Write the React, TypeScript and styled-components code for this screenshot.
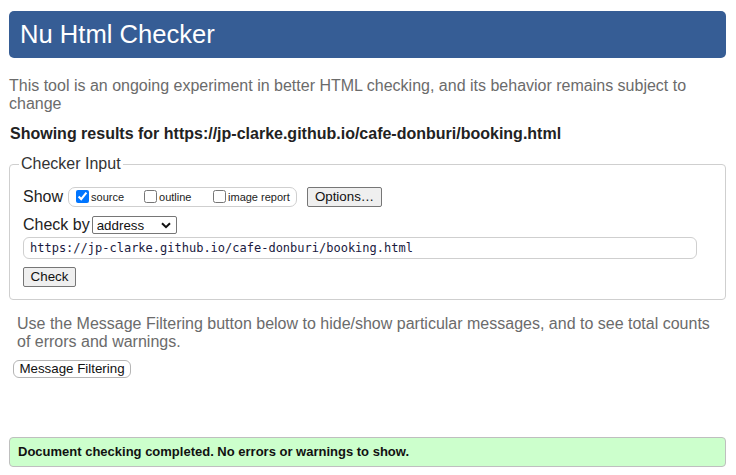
import React from "react";
import styled, { createGlobalStyle } from "styled-components";

const Global = createGlobalStyle`
  html, body { margin: 0; padding: 0; background: #fff; }
  body { font-family: Arial, "Liberation Sans", sans-serif; color: #222; }
  * { box-sizing: border-box; }
`;

const Page = styled.div`
  padding: 11px 10px 0 9px;
  width: 736px;
`;

const Header = styled.h1`
  margin: 0;
  height: 47px;
  display: flex;
  align-items: center;
  padding: 0 0 1px 11px;
  background: #365d95;
  color: #fff;
  border-radius: 5px;
  font-size: 25.6px;
  font-weight: normal;
  font-family: Arial, "Liberation Sans", sans-serif;
`;

const Intro = styled.p<{ $indent?: number; $top: number }>`
  margin: ${(p) => p.$top}px 0 0 ${(p) => p.$indent ?? 0}px;
  font-size: 16px;
  color: #6b6b6b;
  line-height: 18.4px;
`;

const Results = styled.p`
  margin: 11px 0 0 1px;
  font-size: 16px;
  font-weight: bold;
  line-height: 18.4px;
  color: #222;
`;

const Fieldset = styled.fieldset`
  margin: 12px 0 0 0;
  padding: 2px 13px 12px 13px;
  border: 1px solid #cfcfcf;
  border-radius: 4px;
  min-width: 0;
`;

const Legend = styled.legend`
  padding: 0 2px;
  margin-left: -4px;
  font-size: 16px;
  line-height: 18.4px;
  color: #333;
`;

const Row = styled.div<{ $top: number }>`
  display: flex;
  align-items: center;
  margin-top: ${(p) => p.$top}px;
`;

const Label = styled.span<{ $gap?: number }>`
  font-size: 16px;
  color: #222;
  margin-right: ${(p) => p.$gap ?? 5}px;
`;

const OptionGroup = styled.div`
  display: flex;
  align-items: center;
  height: 20px;
  width: 229px;
  padding-left: 7px;
  border: 1px solid #cfcfcf;
  border-radius: 7px;
  margin-right: 10px;
`;

const Option = styled.label<{ $width: number }>`
  display: flex;
  align-items: center;
  width: ${(p) => p.$width}px;
  font-size: 11px;
  color: #222;
  input {
    margin: 0 2px 0 0;
    width: 13px;
    height: 13px;
    accent-color: #0075ff;
  }
`;

const Button = styled.button<{ $w: number; $h?: number; $round?: boolean }>`
  width: ${(p) => p.$w}px;
  height: ${(p) => p.$h ?? 20}px;
  padding: 0;
  font-family: Arial, "Liberation Sans", sans-serif;
  font-size: 13.33px;
  color: #111;
  background: ${(p) => (p.$round ? "#fff" : "#efefef")};
  border: 1px solid ${(p) => (p.$round ? "#b5b5b5" : "#767676")};
  border-radius: ${(p) => (p.$round ? "6px" : "2px")};
`;

const SelectBox = styled.div`
  position: relative;
  width: 85px;
  height: 18px;
  select {
    width: 100%;
    height: 100%;
    appearance: none;
    border: 1px solid #767676;
    border-radius: 2px;
    background: #fff;
    padding: 0 0 0 4px;
    font-family: Arial, "Liberation Sans", sans-serif;
    font-size: 13.33px;
    color: #111;
  }
  svg {
    position: absolute;
    right: 6px;
    top: 6px;
    pointer-events: none;
  }
`;

const UrlInput = styled.input`
  width: 674px;
  height: 22px;
  border: 1px solid #cfcfcf;
  border-radius: 6px;
  padding: 0 0 0 6px;
  font-family: "DejaVu Sans Mono", "Liberation Mono", monospace;
  font-size: 12px;
  color: #1a1a40;
  outline: none;
`;

const Filter = styled.div`
  margin: 8px 0 0 4px;
`;

const Success = styled.div`
  margin-top: 59px;
  height: 30px;
  display: flex;
  align-items: center;
  padding: 0 0 0 8px;
  background: #ccffcc;
  border: 1px solid #bfbfbf;
  border-radius: 4px;
  font-size: 13px;
  font-weight: bold;
  color: #111;
`;

export default function App() {
  return (
    <>
      <Global />
      <Page>
        <Header>Nu Html Checker</Header>
        <Intro $top={19}>
          This tool is an ongoing experiment in better HTML checking, and its behavior remains subject to change
        </Intro>
        <Results>Showing results for https://jp-clarke.github.io/cafe-donburi/booking.html</Results>
        <Fieldset>
          <Legend>Checker Input</Legend>
          <Row $top={11}>
            <Label>Show</Label>
            <OptionGroup>
              <Option $width={68}>
                <input type="checkbox" defaultChecked />
                source
              </Option>
              <Option $width={69}>
                <input type="checkbox" />
                outline
              </Option>
              <Option $width={80}>
                <input type="checkbox" />
                image report
              </Option>
            </OptionGroup>
            <Button $w={75}>Options…</Button>
          </Row>
          <Row $top={9}>
            <Label $gap={2}>Check by</Label>
            <SelectBox>
              <select defaultValue="address">
                <option value="address">address</option>
                <option value="file">file upload</option>
                <option value="text">text input</option>
              </select>
              <svg width="10" height="7" viewBox="0 0 10 7">
                <path d="M1 1.2 L5 5.2 L9 1.2" fill="none" stroke="#111" strokeWidth="2" />
              </svg>
            </SelectBox>
          </Row>
          <Row $top={3}>
            <UrlInput readOnly value="https://jp-clarke.github.io/cafe-donburi/booking.html" />
          </Row>
          <Row $top={8}>
            <Button $w={53}>Check</Button>
          </Row>
        </Fieldset>
        <Intro $top={15} $indent={8}>
          Use the Message Filtering button below to hide/show particular messages, and to see total counts of errors and warnings.
        </Intro>
        <Filter>
          <Button $w={118} $h={18} $round>Message Filtering</Button>
        </Filter>
        <Success>Document checking completed. No errors or warnings to show.</Success>
      </Page>
    </>
  );
}
